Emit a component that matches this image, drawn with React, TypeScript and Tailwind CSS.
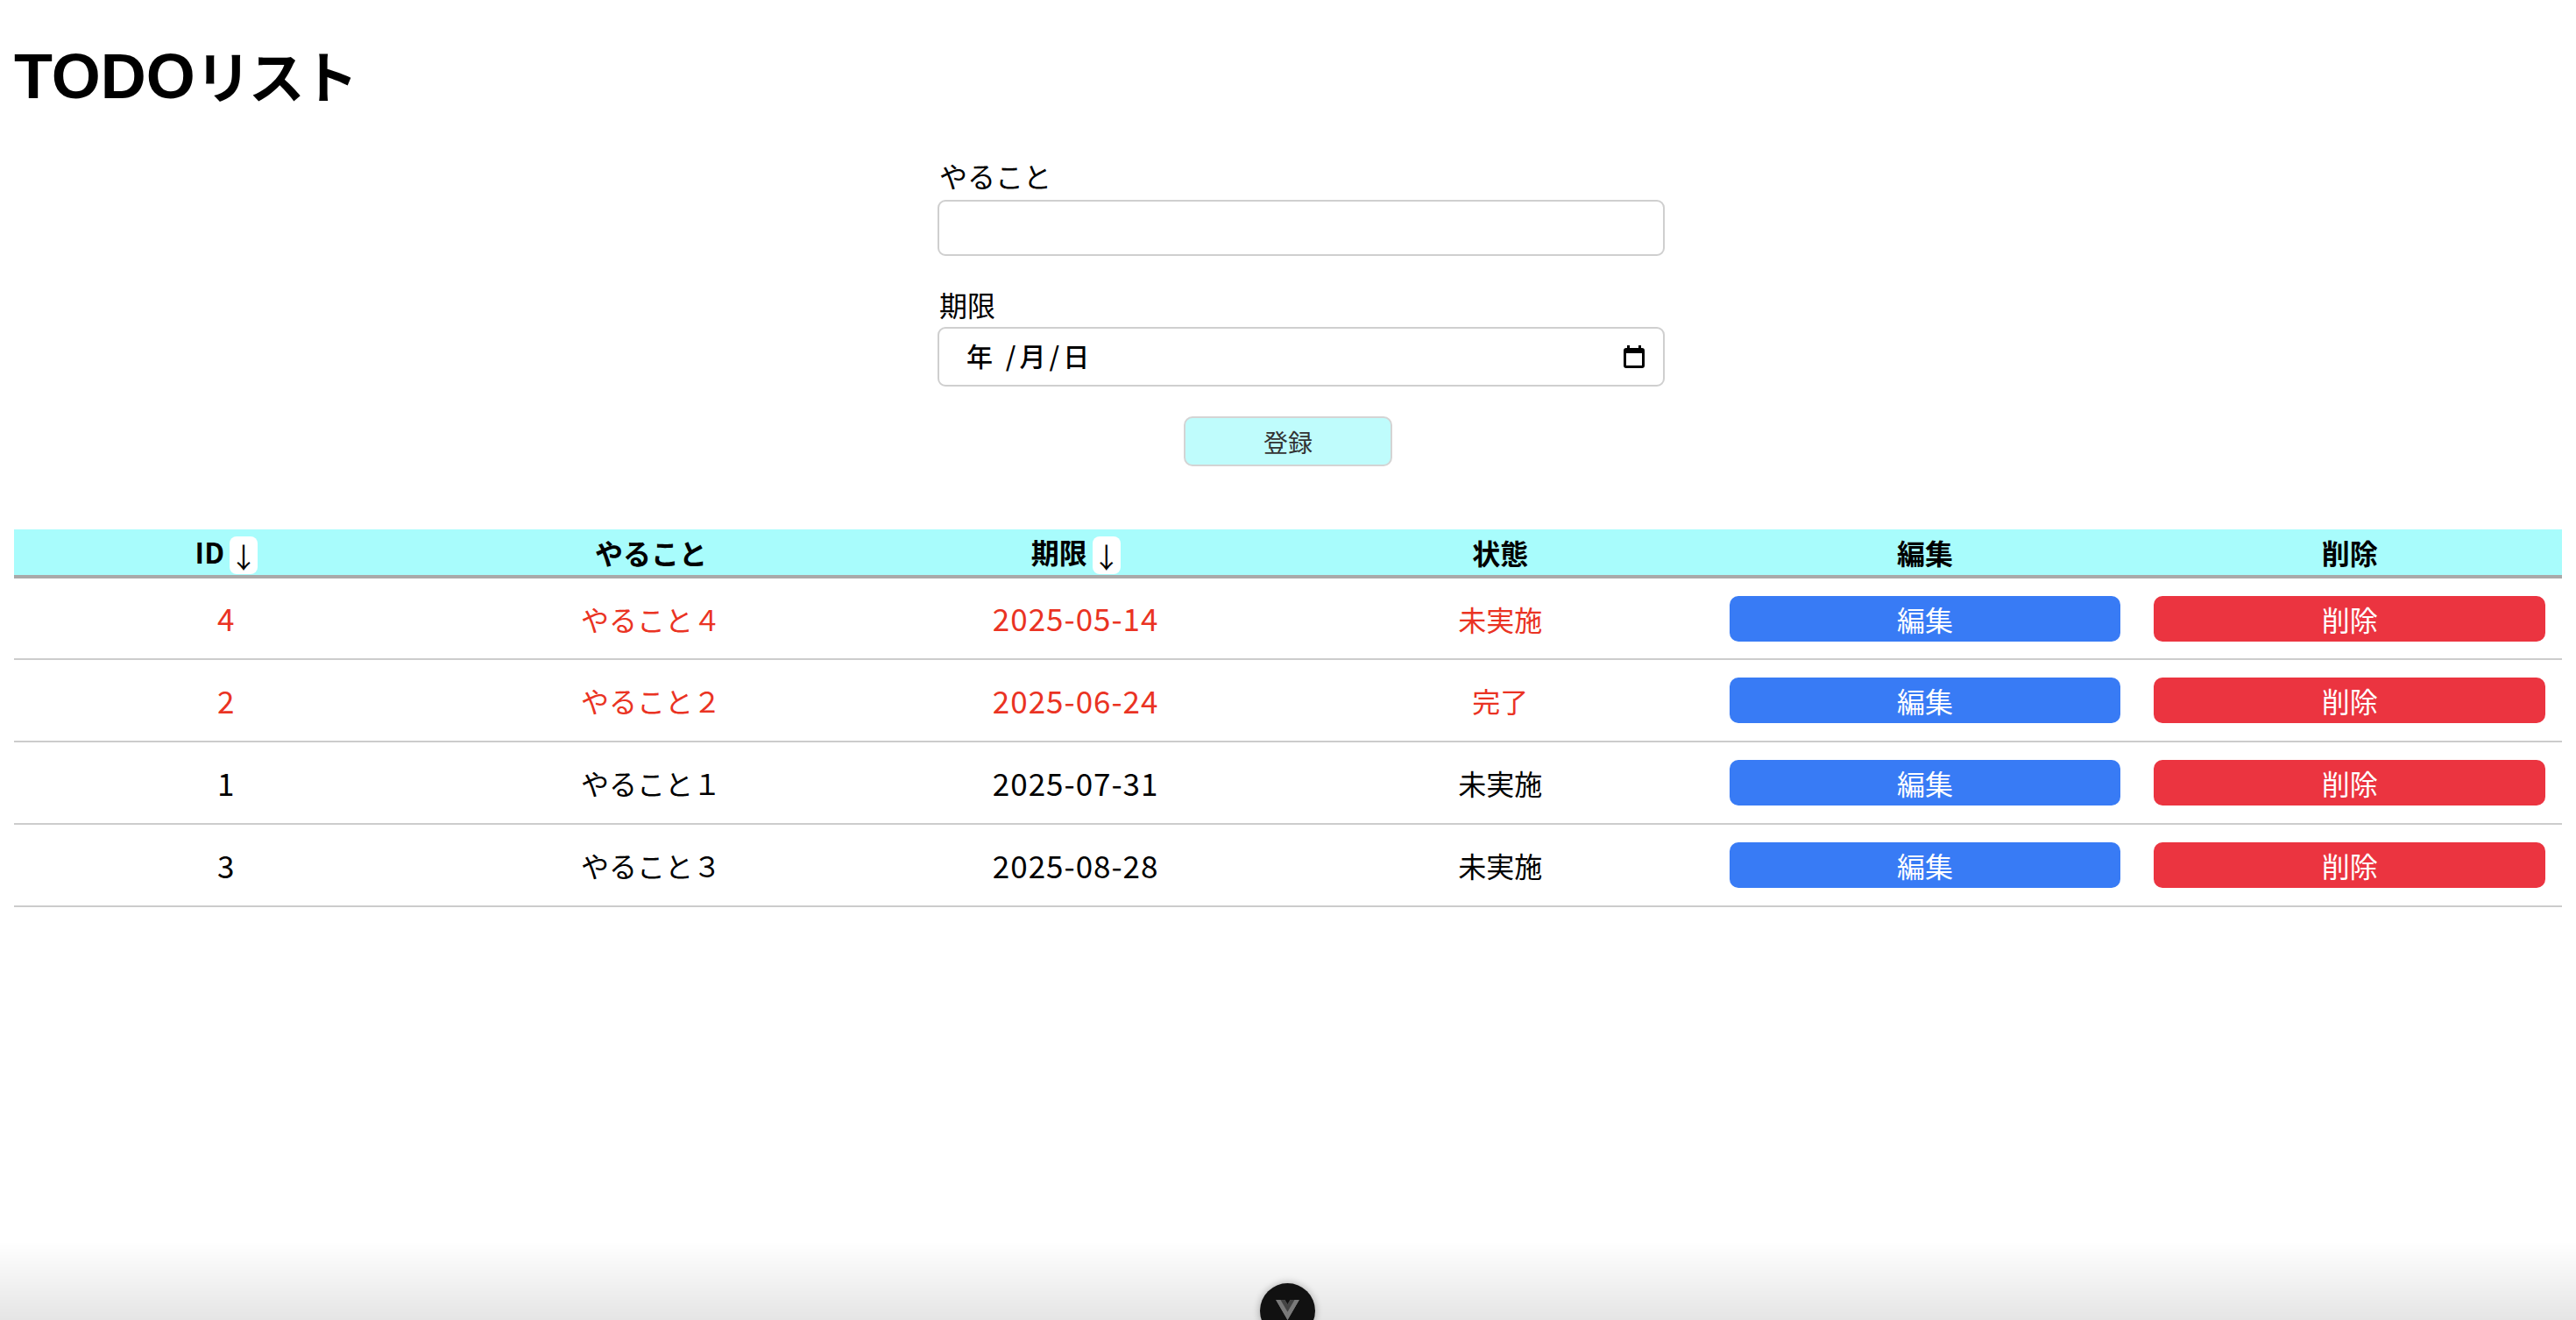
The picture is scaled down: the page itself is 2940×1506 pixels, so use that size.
import React from "react";

type Row = { id: number; title: string; due: string; status: string; red: boolean };

const rows: Row[] = [
  { id: 4, title: "やること４", due: "2025-05-14", status: "未実施", red: true },
  { id: 2, title: "やること２", due: "2025-06-24", status: "完了", red: true },
  { id: 1, title: "やること１", due: "2025-07-31", status: "未実施", red: false },
  { id: 3, title: "やること３", due: "2025-08-28", status: "未実施", red: false },
];

function SortButton() {
  return (
    <span className="inline-flex items-center justify-center align-middle ml-[6px] w-[32px] h-[43px] rounded-[8px] bg-white text-[32px] font-normal leading-none">
      ↓
    </span>
  );
}

function CalendarIcon() {
  return (
    <svg width="24" height="26" viewBox="0 0 24 26" fill="#000">
      <rect x="4" y="0" width="3" height="4" />
      <rect x="17" y="0" width="3" height="4" />
      <path
        fillRule="evenodd"
        d="M3 3h18a3 3 0 0 1 3 3v17a3 3 0 0 1-3 3H3a3 3 0 0 1-3-3V6a3 3 0 0 1 3-3z M3 9v14h18V9z"
      />
    </svg>
  );
}

export default function App() {
  return (
    <div className="px-[16px] bg-white text-black font-['Noto_Sans_CJK_JP',sans-serif]">
      <h1 className="pt-[45px] text-[72px] leading-[84px] font-bold font-['Liberation_Sans','Noto_Sans_CJK_JP',sans-serif]">
        TODO<span className="text-[64px] tracking-[-3px]">リスト</span>
      </h1>

      <div className="w-[800px] mx-auto mt-[48px] flex flex-col">
        <label className="text-[32px] leading-[40px] pl-[2px]">やること</label>
        <input
          type="text"
          className="mt-[8px] w-[830px] h-[64px] border-2 border-[#cfcfcf] rounded-[9px] px-[16px] text-[32px] outline-none"
        />
        <label className="mt-[35px] text-[32px] leading-[40px] pl-[2px]">期限</label>
        <div className="mt-[6px] w-[830px] h-[68px] border-2 border-[#cfcfcf] rounded-[9px] flex items-center pl-[31px] pr-[21px]">
          <span className="text-[30px] tracking-[4px] font-medium -mt-[3px]">年 /月/日</span>
          <span className="ml-auto flex items-center">
            <CalendarIcon />
          </span>
        </div>
        <button className="self-center mt-[34px] w-[238px] h-[57px] bg-[#bffcfc] border-2 border-[#d4d4d4] rounded-[10px] text-[28px] text-[#333]">
          登録
        </button>
      </div>

      <table className="mt-[72px] w-full table-fixed border-collapse">
        <thead>
          <tr className="bg-[#a8fcfc]">
            <th className="h-[54px] p-0 border-b-4 border-[#a9a9a9] text-[32px] font-bold">
              ID<SortButton />
            </th>
            <th className="h-[54px] p-0 border-b-4 border-[#a9a9a9] text-[32px] font-bold">やること</th>
            <th className="h-[54px] p-0 border-b-4 border-[#a9a9a9] text-[32px] font-bold">
              期限<SortButton />
            </th>
            <th className="h-[54px] p-0 border-b-4 border-[#a9a9a9] text-[32px] font-bold">状態</th>
            <th className="h-[54px] p-0 border-b-4 border-[#a9a9a9] text-[32px] font-bold">編集</th>
            <th className="h-[54px] p-0 border-b-4 border-[#a9a9a9] text-[32px] font-bold">削除</th>
          </tr>
        </thead>
        <tbody>
          {rows.map((r) => {
            const c = r.red ? "text-[#ea3323]" : "text-black";
            return (
              <tr key={r.id}>
                <td className={`h-[94px] border-b-2 border-[#cccccc] text-center text-[35px] tracking-[1px] ${c}`}>{r.id}</td>
                <td className={`h-[94px] border-b-2 border-[#cccccc] text-center text-[32px] ${c}`}>{r.title}</td>
                <td className={`h-[94px] border-b-2 border-[#cccccc] text-center text-[35px] tracking-[1px] ${c}`}>{r.due}</td>
                <td className={`h-[94px] border-b-2 border-[#cccccc] text-center text-[32px] ${c}`}>{r.status}</td>
                <td className="h-[94px] border-b-2 border-[#cccccc] px-[19px]">
                  <button className="w-full h-[52px] rounded-[10px] bg-[#387bf5] text-white text-[32px]">編集</button>
                </td>
                <td className="h-[94px] border-b-2 border-[#cccccc] px-[19px]">
                  <button className="w-full h-[52px] rounded-[10px] bg-[#eb3440] text-white text-[32px]">削除</button>
                </td>
              </tr>
            );
          })}
        </tbody>
      </table>

      <div className="fixed inset-x-0 bottom-0 h-[90px] pointer-events-none bg-linear-to-b from-[rgba(0,0,0,0)] to-[rgba(0,0,0,0.1)]" />
      <div className="fixed left-[1438px] bottom-[-21px] w-[63px] h-[63px] rounded-full bg-[#111] shadow-[0_0_8px_rgba(0,0,0,0.3)] flex justify-center pt-[19px]">
        <svg width="27" height="23" viewBox="0 0 256 221">
          <path d="M204.8 0H256L128 220.8L0 0H97.92L128 51.2L157.44 0H204.8Z" fill="#7a7a7a" />
          <path d="M0 0L128 220.8L256 0H204.8L128 132.48L50.56 0H0Z" fill="#7a7a7a" />
          <path d="M50.56 0L128 133.12L204.8 0H157.44L128 51.2L97.92 0H50.56Z" fill="#444" />
        </svg>
      </div>
    </div>
  );
}
